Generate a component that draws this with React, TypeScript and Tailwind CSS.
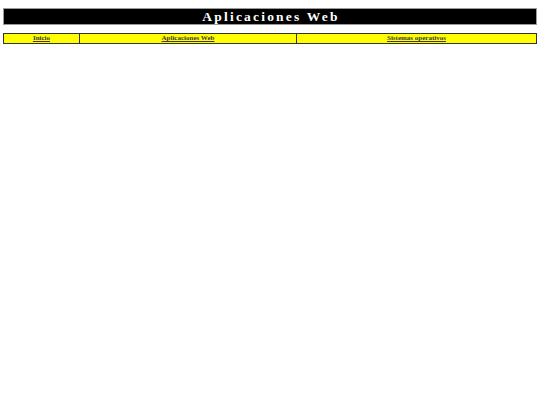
export default function App() {
  const links = [
    { label: 'Inicio', w: 'w-[75px]' },
    { label: 'Aplicaciones Web', w: 'w-[217px]' },
    { label: 'Sistemas operativos', w: 'flex-1' },
  ];
  return (
    <div className="min-h-screen bg-white px-[3px] pt-[8px] font-['Liberation_Serif',serif]">
      <div className="h-[17px] bg-black border border-[#9a9a9a] flex items-center justify-center">
        <h1 className="text-white font-bold text-[13.5px] leading-none tracking-[2.2px] pl-[2px]">
          Aplicaciones Web
        </h1>
      </div>
      <div className="mt-[8px] h-[11px] bg-[#ffff00] border border-[#333] flex">
        {links.map((l, i) => (
          <div
            key={l.label}
            className={`${l.w} ${i > 0 ? 'border-l border-[#333]' : ''} flex items-center justify-center`}
          >
            <a href="#" className="text-[7px] leading-none font-bold underline text-[#3a3a3a]">
              {l.label}
            </a>
          </div>
        ))}
      </div>
    </div>
  );
}
